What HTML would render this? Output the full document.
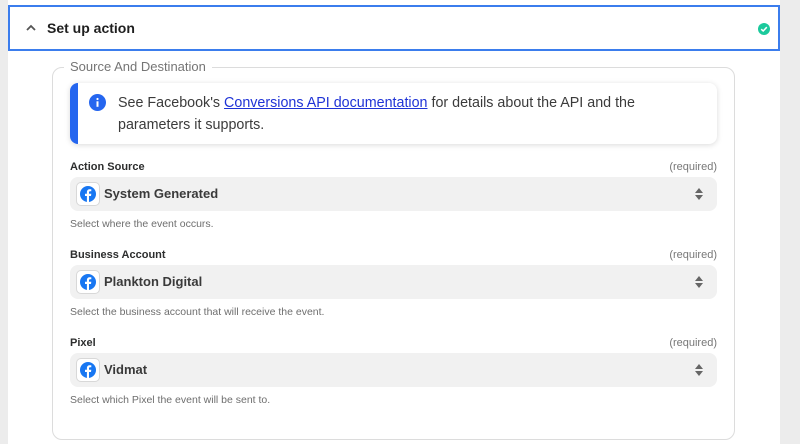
<!DOCTYPE html>
<html><head><style>
*{box-sizing:border-box;margin:0;padding:0}
body{width:800px;height:444px;background:#ececec;font-family:"Liberation Sans",sans-serif;position:relative;overflow:hidden;color:#2d2e2e}
.panel{position:absolute;left:8px;top:0;width:772px;height:444px;background:#fff}
.hdr{position:absolute;left:8px;top:5px;width:772px;height:46px;border:2px solid #3b7ded;background:#fff}
.hdr .t{position:absolute;left:37px;top:13px;font-size:14px;font-weight:bold;color:#1f1f1f}
.chev{position:absolute;left:15px;top:16px}
.chk{position:absolute;left:748px;top:16px}
.fs{position:absolute;left:52px;top:67px;width:683px;height:373px;border:1px solid #dcdcdc;border-radius:10px}
.legend{position:absolute;left:64px;top:59px;background:#fff;padding:0 6px;font-size:13px;color:#757575}
.info{position:absolute;left:70px;top:83px;width:647px;height:61px;border-radius:8px;background:#fff;box-shadow:0 1px 6px rgba(0,0,0,.15);overflow:hidden}
.info .bar{position:absolute;left:0;top:0;width:8px;height:100%;background:#2566ef}
.info .ic{position:absolute;left:19px;top:11px}
.info .tx{position:absolute;left:48px;top:9px;font-size:14.3px;line-height:22px;color:#3b3b3b}
.info a{color:#1f33d6;text-decoration:underline}
.lbl{position:absolute;left:70px;font-size:11px;font-weight:bold;color:#2d2e2e}
.req{position:absolute;right:83px;font-size:11px;color:#777}
.sel{position:absolute;left:70px;width:647px;height:34px;background:#f1f1f1;border-radius:8px}
.sel .fb{position:absolute;left:6px;top:5px;width:24px;height:24px;border:1px solid #d8d8d8;border-radius:5px;background:#fff}
.sel .fb svg{position:absolute;left:3px;top:3px}
.sel .v{position:absolute;left:34px;top:9px;font-size:13px;font-weight:bold;color:#3a3a3a}
.sel .ar{position:absolute;right:14px;top:11px}
.help{position:absolute;left:70px;font-size:10.5px;color:#6e6e6e}
</style></head><body>
<div class="panel"></div>
<div class="hdr">
<svg class="chev" width="12" height="10" viewBox="0 0 12 10"><path d="M2 7 L6 3 L10 7" stroke="#555" stroke-width="1.8" fill="none"/></svg>
<div class="t">Set up action</div>
<svg class="chk" width="12" height="12" viewBox="0 0 12 12"><circle cx="6" cy="6" r="6" fill="#1bc99c"/><path d="M3.2 6.2 L5.2 8 L8.8 4.2" stroke="#fff" stroke-width="1.5" fill="none"/></svg>
</div>
<div class="fs"></div>
<div class="legend">Source And Destination</div>
<div class="info"><div class="bar"></div>
<svg class="ic" width="17" height="17" viewBox="0 0 17 17"><circle cx="8.5" cy="8.5" r="8.5" fill="#2566ef"/><rect x="7.5" y="7.3" width="2" height="5.5" fill="#fff"/><circle cx="8.5" cy="5" r="1.1" fill="#fff"/></svg>
<div class="tx">See Facebook's <a>Conversions API documentation</a> for details about the API and the<br>parameters it supports.</div></div>

<div class="lbl" style="top:161px">Action Source</div><div class="req" style="top:161px">(required)</div>
<div class="sel" style="top:177px"><div class="fb"><svg width="16" height="16" viewBox="0 0 16 16"><circle cx="8" cy="8" r="8" fill="#1877f2"/><path d="M9 16V10h2l.3-2.3H9V6.4c0-.6.2-1.1 1.1-1.1h1.2V3.3C11 3.2 10.4 3.2 9.8 3.2 8.1 3.2 6.9 4.2 6.9 6.1v1.6H5V10h1.9v6z" fill="#fff"/></svg></div><div class="v">System Generated</div>
<svg class="ar" width="8" height="12" viewBox="0 0 8 12"><path d="M4 0 L8 5 H0Z M0 7 H8 L4 12Z" fill="#666"/></svg></div>
<div class="help" style="top:218px">Select where the event occurs.</div>

<div class="lbl" style="top:249px">Business Account</div><div class="req" style="top:249px">(required)</div>
<div class="sel" style="top:265px"><div class="fb"><svg width="16" height="16" viewBox="0 0 16 16"><circle cx="8" cy="8" r="8" fill="#1877f2"/><path d="M9 16V10h2l.3-2.3H9V6.4c0-.6.2-1.1 1.1-1.1h1.2V3.3C11 3.2 10.4 3.2 9.8 3.2 8.1 3.2 6.9 4.2 6.9 6.1v1.6H5V10h1.9v6z" fill="#fff"/></svg></div><div class="v">Plankton Digital</div>
<svg class="ar" width="8" height="12" viewBox="0 0 8 12"><path d="M4 0 L8 5 H0Z M0 7 H8 L4 12Z" fill="#666"/></svg></div>
<div class="help" style="top:306px">Select the business account that will receive the event.</div>

<div class="lbl" style="top:337px">Pixel</div><div class="req" style="top:337px">(required)</div>
<div class="sel" style="top:353px"><div class="fb"><svg width="16" height="16" viewBox="0 0 16 16"><circle cx="8" cy="8" r="8" fill="#1877f2"/><path d="M9 16V10h2l.3-2.3H9V6.4c0-.6.2-1.1 1.1-1.1h1.2V3.3C11 3.2 10.4 3.2 9.8 3.2 8.1 3.2 6.9 4.2 6.9 6.1v1.6H5V10h1.9v6z" fill="#fff"/></svg></div><div class="v">Vidmat</div>
<svg class="ar" width="8" height="12" viewBox="0 0 8 12"><path d="M4 0 L8 5 H0Z M0 7 H8 L4 12Z" fill="#666"/></svg></div>
<div class="help" style="top:394px">Select which Pixel the event will be sent to.</div>
</body></html>
